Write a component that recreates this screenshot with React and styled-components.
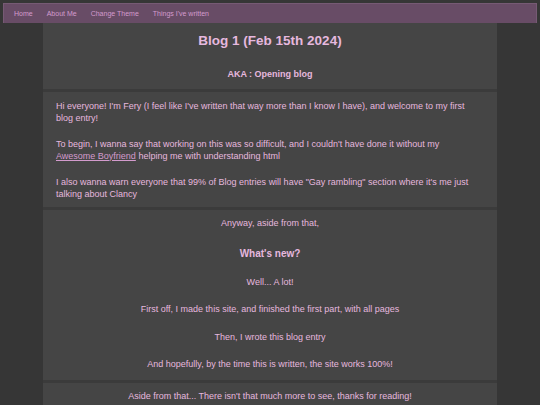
import React from "react";
import styled, { createGlobalStyle } from "styled-components";

const GlobalStyle = createGlobalStyle`
  html, body {
    margin: 0;
    padding: 0;
    background: #363636;
    overflow: hidden;
  }
  body {
    font-family: "Liberation Sans", Arial, sans-serif;
    color: #e6b8df;
  }
`;

const Page = styled.div`
  display: flex;
  flex-direction: column;
  padding-top: 3px;
`;

const NavBar = styled.nav`
  display: flex;
  align-items: center;
  gap: 14px;
  height: 19px;
  margin: 0 3px 0 3px;
  padding: 0 10px;
  background: #684c66;
  border: 1px solid #765a74;
  border-bottom: none;
`;

const NavLink = styled.a`
  font-size: 7px;
  color: #d39bcd;
  text-decoration: none;
  cursor: pointer;
`;

const Column = styled.main`
  width: 454px;
  margin: 0 auto;
  display: flex;
  flex-direction: column;
  gap: 3px;
  background: #3b3b3b;
`;

const Panel = styled.section`
  background: #454545;
  padding: ${(p) => p.$pad || "10px 13px"};
  text-align: ${(p) => (p.$center ? "center" : "left")};
`;

const Title = styled.h1`
  margin: 0;
  font-size: 13.5px;
  font-weight: bold;
  line-height: 18px;
`;

const Subtitle = styled.h2`
  margin: 18px 0 0;
  font-size: 9px;
  font-weight: bold;
  line-height: 12px;
`;

const Text = styled.p`
  margin: 0 0 ${(p) => p.$gap || "16px"};
  font-size: 9px;
  line-height: 11.5px;
  &:last-child {
    margin-bottom: 0;
  }
`;

const Heading = styled.h3`
  margin: 0 0 17px;
  font-size: 10px;
  font-weight: bold;
  line-height: 12px;
`;

const Link = styled.a`
  color: #d39bcd;
  text-decoration: underline;
  white-space: nowrap;
`;

export default function App() {
  return (
    <>
      <GlobalStyle />
      <Page>
        <NavBar>
          <NavLink>Home</NavLink>
          <NavLink>About Me</NavLink>
          <NavLink>Change Theme</NavLink>
          <NavLink>Things I've written</NavLink>
        </NavBar>
        <Column>
          <Panel $center $pad="9px 13px 9px">
            <Title>Blog 1 (Feb 15th 2024)</Title>
            <Subtitle>AKA : Opening blog</Subtitle>
          </Panel>
          <Panel $pad="9px 13px 7px">
            <Text $gap="15px">
              Hi everyone! I'm Fery (I feel like I've written that way more than I
              know I have), and welcome to my first blog entry!
            </Text>
            <Text $gap="15px">
              To begin, I wanna say that working on this was so difficult, and I
              couldn't have done it without my <Link>Awesome Boyfriend</Link> helping
              me with understanding html
            </Text>
            <Text>
              I also wanna warn everyone that 99% of Blog entries will have "Gay
              rambling" section where it's me just talking about Clancy
            </Text>
          </Panel>
          <Panel $center $pad="8px 13px 9px">
            <Text $gap="18px">Anyway, aside from that,</Text>
            <Heading>What's new?</Heading>
            <Text>Well... A lot!</Text>
            <Text>First off, I made this site, and finished the first part, with all pages</Text>
            <Text>Then, I wrote this blog entry</Text>
            <Text>And hopefully, by the time this is written, the site works 100%!</Text>
          </Panel>
          <Panel $center $pad="8px 13px 20px">
            <Text>Aside from that... There isn't that much more to see, thanks for reading!</Text>
          </Panel>
        </Column>
      </Page>
    </>
  );
}
